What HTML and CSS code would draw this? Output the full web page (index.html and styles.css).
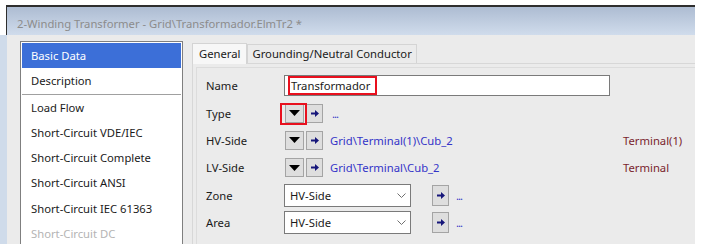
FILE: index.html
```html
<!DOCTYPE html>
<html lang="en">
<head>
    <meta charset="UTF-8">
    <meta name="viewport" content="width=device-width, initial-scale=1.0">
    <title>2-Winding Transformer</title>
    <link rel="stylesheet" href="styles.css">
</head>
<body>
    <div class="window">
        <div class="title-bar">2-Winding Transformer - Grid\Transformador.ElmTr2 *</div>
        <div class="frame">
            <ul class="page-list">
                <li class="selected">Basic Data</li>
                <li class="separated">Description</li>
                <li>Load Flow</li>
                <li>Short-Circuit VDE/IEC</li>
                <li>Short-Circuit Complete</li>
                <li>Short-Circuit ANSI</li>
                <li>Short-Circuit IEC 61363</li>
                <li class="disabled">Short-Circuit DC</li>
            </ul>

            <div class="editor">
                <div class="tabs">
                    <div class="tab active">General</div>
                    <div class="tab">Grounding/Neutral Conductor</div>
                </div>
                <div class="tab-page">
                    <div class="group">
                        <div class="form">
                            <label>Name</label>
                            <div class="field">
                                <div class="text-input"><span class="marked">Transformador</span></div>
                            </div>
                            <div></div>

                            <label>Type</label>
                            <div class="field">
                                <div class="btn pick flagged">
                                    <svg width="11" height="6" viewBox="0 0 11 6"><path d="M0 0h11L5.5 6z" fill="#000"/></svg>
                                </div>
                                <div class="btn jump">
                                    <svg width="8" height="7" viewBox="0 0 8 7"><path d="M0 2.5h4V0l4 3.5L4 7V4.5H0z" fill="#16167a"/></svg>
                                </div>
                                <span class="dots">...</span>
                            </div>
                            <div></div>

                            <label>HV-Side</label>
                            <div class="field">
                                <div class="btn pick">
                                    <svg width="11" height="6" viewBox="0 0 11 6"><path d="M0 0h11L5.5 6z" fill="#000"/></svg>
                                </div>
                                <div class="btn jump">
                                    <svg width="8" height="7" viewBox="0 0 8 7"><path d="M0 2.5h4V0l4 3.5L4 7V4.5H0z" fill="#16167a"/></svg>
                                </div>
                                <span class="link">Grid\Terminal(1)\Cub_2</span>
                            </div>
                            <div class="node">Terminal(1)</div>

                            <label>LV-Side</label>
                            <div class="field">
                                <div class="btn pick">
                                    <svg width="11" height="6" viewBox="0 0 11 6"><path d="M0 0h11L5.5 6z" fill="#000"/></svg>
                                </div>
                                <div class="btn jump">
                                    <svg width="8" height="7" viewBox="0 0 8 7"><path d="M0 2.5h4V0l4 3.5L4 7V4.5H0z" fill="#16167a"/></svg>
                                </div>
                                <span class="link">Grid\Terminal\Cub_2</span>
                            </div>
                            <div class="node">Terminal</div>

                            <label>Zone</label>
                            <div class="field">
                                <div class="combo">
                                    <span>HV-Side</span>
                                    <svg width="9" height="5" viewBox="0 0 9 5"><path d="M0.5 0.5l4 4 4-4" fill="none" stroke="#707070"/></svg>
                                </div>
                                <div class="btn jump tall">
                                    <svg width="8" height="7" viewBox="0 0 8 7"><path d="M0 2.5h4V0l4 3.5L4 7V4.5H0z" fill="#16167a"/></svg>
                                </div>
                                <span class="dots">...</span>
                            </div>
                            <div></div>

                            <label>Area</label>
                            <div class="field">
                                <div class="combo">
                                    <span>HV-Side</span>
                                    <svg width="9" height="5" viewBox="0 0 9 5"><path d="M0.5 0.5l4 4 4-4" fill="none" stroke="#707070"/></svg>
                                </div>
                                <div class="btn jump tall">
                                    <svg width="8" height="7" viewBox="0 0 8 7"><path d="M0 2.5h4V0l4 3.5L4 7V4.5H0z" fill="#16167a"/></svg>
                                </div>
                                <span class="dots">...</span>
                            </div>
                            <div></div>
                        </div>
                    </div>
                </div>
            </div>
        </div>
    </div>
</body>
</html>
```

FILE: styles.css
```css
body {
    margin: 0;
    background-color: #ffffff;
    color: #1a1a1a;
    font-family: "Noto Sans", sans-serif;
    font-size: 11.25px;
}

.window {
    width: 695px;
    height: 244px;
    display: flex;
    flex-direction: column;
}

.title-bar {
    margin: 5px 0 0 6px;
    height: 30px;
    box-sizing: border-box;
    border-top: 2px solid #2e2e2e;
    border-left: 1px solid #2e2e2e;
    background: linear-gradient(#adbcd2, #d0dcec);
    color: #8c8c8c;
    padding: 6px 0 0 10px;
    line-height: 22px;
}

.frame {
    flex: 1;
    display: flex;
    min-height: 0;
    background-color: #ebebeb;
    border-left: 7px solid #cfdbea;
    padding: 6px 0 0 13px;
}

/* left page list */
.page-list {
    margin: 0;
    padding: 1px;
    list-style: none;
    width: 159px;
    background-color: #ffffff;
    border: 1px solid #7f7f7f;
    border-bottom: none;
}

.page-list li {
    height: 25.3px;
    line-height: 25px;
    padding-left: 9px;
}

.page-list .selected {
    background-color: #3c6fd8;
    color: #ffffff;
}

.page-list .separated {
    border-bottom: 1px solid #a0a0a0;
}

.page-list .disabled {
    color: #b4b4b4;
}

/* right editor */
.editor {
    flex: 1;
    display: flex;
    flex-direction: column;
    margin-left: 9px;
}

.tabs {
    display: flex;
    align-items: flex-end;
    height: 21px;
    margin-top: 1px;
}

.tab {
    height: 18px;
    line-height: 18px;
    padding: 0 4px;
    border: 1px solid #d4d4d4;
    border-bottom: none;
    background-color: #ebebeb;
}

.tab.active {
    height: 20px;
    line-height: 20px;
    padding: 0 6px;
    background-color: #f7f7f7;
    margin-bottom: -1px;
    position: relative;
}

.tab-page {
    flex: 1;
    border: 1px solid #d7d7d7;
    border-bottom: none;
    border-right: none;
    padding: 3px 0 0 3px;
}

.group {
    height: 100%;
    box-sizing: border-box;
    border: 1px solid #dcdcdc;
    border-right: none;
    border-bottom: none;
    padding: 4px 0 0 9px;
}

.form {
    display: grid;
    grid-template-columns: 78px 339px 70px;
    grid-auto-rows: 27.4px;
    align-items: center;
}

.field {
    display: flex;
    align-items: center;
}

.text-input {
    width: 326px;
    height: 21px;
    box-sizing: border-box;
    border: 1px solid #7a7a7a;
    background-color: #ffffff;
    display: flex;
    align-items: center;
}

.marked {
    width: 89px;
    height: 19px;
    box-sizing: border-box;
    margin-left: 3px;
    padding-left: 1px;
    line-height: 15px;
    border: 2px solid #e8101e;
}

.btn {
    height: 19px;
    box-sizing: border-box;
    border: 1px solid #a4a4a4;
    background-color: #dedede;
    display: flex;
    align-items: center;
    justify-content: center;
}

.pick {
    width: 19px;
    margin-left: 1px;
}

.jump {
    width: 17px;
    margin-left: 2px;
}

.jump.tall {
    height: 21px;
    margin-left: 21px;
}

.flagged {
    position: relative;
}

.flagged::after {
    content: "";
    position: absolute;
    left: -6px;
    right: -4px;
    top: -2px;
    bottom: -3px;
    border: 2px solid #e8101e;
}

.dots {
    color: #3434c8;
    margin-left: 9px;
    letter-spacing: -1px;
}

.jump.tall + .dots {
    margin-left: 7px;
}

.link {
    color: #3434c8;
    margin-left: 7px;
}

.node {
    color: #7a1f2e;
}

.combo {
    width: 127px;
    height: 23px;
    box-sizing: border-box;
    border: 1px solid #7a7a7a;
    background-color: #ffffff;
    display: flex;
    align-items: center;
    justify-content: space-between;
    padding: 0 4px 0 5px;
}
```
